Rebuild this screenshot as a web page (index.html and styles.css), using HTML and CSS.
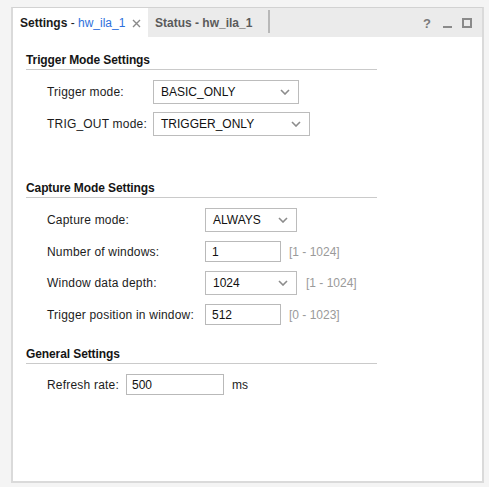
FILE: index.html
```html
<!DOCTYPE html>
<html>
<head>
<meta charset="utf-8">
<link rel="stylesheet" href="styles.css">
</head>
<body>
<div class="panel">
  <div class="tabbar">
    <div class="tab active">
      <span class="b">Settings</span><span class="dash">&nbsp;-&nbsp;</span><span class="blue">hw_ila_1</span>
      <svg class="close" width="9" height="9" viewBox="0 0 9 9"><path d="M1 1L8 8M8 1L1 8" stroke="#8a8a8a" stroke-width="1.4" fill="none"/></svg>
    </div>
    <div class="tab inactive">Status - hw_ila_1</div>
    <div class="sep"></div>
    <div class="tools">
      <span class="help">?</span>
      <span class="minimize"></span>
      <span class="maximize"></span>
    </div>
  </div>
  <div class="content">
    <div class="group g1">
      <div class="heading">Trigger Mode Settings</div>
      <div class="rows">
        <div class="row r24"><span class="label">Trigger mode:</span><div class="select w146">BASIC_ONLY<svg class="chev" width="10" height="6" viewBox="0 0 10 6"><path d="M1 1L5 5L9 1" stroke="#8c8c8c" stroke-width="1.6" fill="none"/></svg></div></div>
        <div class="row r24"><span class="label">TRIG_OUT mode:</span><div class="select w157">TRIGGER_ONLY<svg class="chev" width="10" height="6" viewBox="0 0 10 6"><path d="M1 1L5 5L9 1" stroke="#8c8c8c" stroke-width="1.6" fill="none"/></svg></div></div>
      </div>
    </div>
    <div class="group g2">
      <div class="heading">Capture Mode Settings</div>
      <div class="rows">
        <div class="row r24"><span class="label">Capture mode:</span><div class="select w92">ALWAYS<svg class="chev" width="10" height="6" viewBox="0 0 10 6"><path d="M1 1L5 5L9 1" stroke="#8c8c8c" stroke-width="1.6" fill="none"/></svg></div></div>
        <div class="row r21"><span class="label">Number of windows:</span><div class="input w76">1</div><span class="range">[1 - 1024]</span></div>
        <div class="row r24"><span class="label">Window data depth:</span><div class="select w92">1024<svg class="chev" width="10" height="6" viewBox="0 0 10 6"><path d="M1 1L5 5L9 1" stroke="#8c8c8c" stroke-width="1.6" fill="none"/></svg></div><span class="range r9">[1 - 1024]</span></div>
        <div class="row r21"><span class="label">Trigger position in window:</span><div class="input w76">512</div><span class="range">[0 - 1023]</span></div>
      </div>
    </div>
    <div class="group g3">
      <div class="heading">General Settings</div>
      <div class="rows">
        <div class="row r21"><span class="label">Refresh rate:</span><div class="input w98">500</div><span class="unit">ms</span></div>
      </div>
    </div>
  </div>
</div>
</body>
</html>
```

FILE: styles.css
```css
* { box-sizing: border-box; }
html, body { margin: 0; padding: 0; }
body {
  background: #f4f4f4;
  font-family: "Liberation Sans", Arial, sans-serif;
  font-size: 12px;
  color: #1c1c1c;
  width: 489px;
  height: 487px;
  overflow: hidden;
}
.panel {
  margin: 7px 0 0 11px;
  width: 473px;
  height: 476px;
  background: #ffffff;
  border: 2px solid #dadada;
  border-top: 1px solid #d2d2d2;
  display: flex;
  flex-direction: column;
}
.tabbar {
  height: 29px;
  background: #ebebeb;
  display: flex;
  align-items: stretch;
  flex: none;
}
.tab {
  display: flex;
  align-items: center;
  padding-left: 7px;
  padding-top: 1px;
  line-height: 16px;
}
.tab.active {
  width: 135px;
  background: #ffffff;
  color: #1a1a1a;
}
.b { font-weight: bold; }
.blue { color: #2e6fdc; }
.close { margin-left: 7px; margin-top: 1px; }
.tab.inactive {
  font-weight: bold;
  color: #5a5a5a;
}
.sep {
  width: 2px;
  margin: 2px 0 4px 16px;
  background: #b8b8b8;
}
.tools {
  margin-left: auto;
  display: flex;
  align-items: center;
  padding-right: 10px;
  padding-top: 1px;
}
.help {
  font-weight: bold;
  color: #7a7a7a;
  font-size: 13px;
  margin-right: 12px;
}
.minimize {
  width: 9px;
  height: 2px;
  background: #8a8a8a;
  margin-top: 8px;
  margin-right: 10px;
}
.maximize {
  width: 10px;
  height: 10px;
  border: 2px solid #8a8a8a;
}
.content {
  padding: 15px 0 0 13px;
}
.heading {
  width: 351px;
  font-weight: bold;
  line-height: 16px;
  padding-bottom: 1px;
  border-bottom: 1px solid #cacaca;
  color: #151515;
  letter-spacing: -0.1px;
}
.rows {
  padding-left: 21px;
  margin-top: 10px;
  display: flex;
  flex-direction: column;
  gap: 8px;
}
.g2 { margin-top: 44px; }
.g2 .rows { margin-top: 10px; gap: 9px; }
.g3 { margin-top: 21px; }
.g3 .rows { margin-top: 10px; }
.row {
  display: flex;
  align-items: center;
}
.r24 { height: 24px; }
.r21 { height: 21px; }
.label { flex: none; letter-spacing: 0.2px; }
.g1 .label { width: 106px; }
.g2 .label { width: 158px; }
.g3 .label { width: 79px; }
.select, .input {
  height: 100%;
  border: 1px solid #bcbcbc;
  background: #ffffff;
  display: flex;
  align-items: center;
  color: #111;
}
.select {
  padding-left: 7px;
}
.chev {
  margin-left: auto;
  margin-right: 8px;
}
.input { padding-left: 6px; border-color: #b9b9b9; }
.g3 .input { padding-left: 5px; }
.w146 { width: 146px; }
.w157 { width: 157px; }
.w92 { width: 92px; }
.w76 { width: 76px; }
.w98 { width: 98px; }
.range {
  color: #9a9a9a;
  margin-left: 8px;
}
.range.r9 { margin-left: 9px; }
.unit {
  margin-left: 8px;
  color: #1c1c1c;
}
```
